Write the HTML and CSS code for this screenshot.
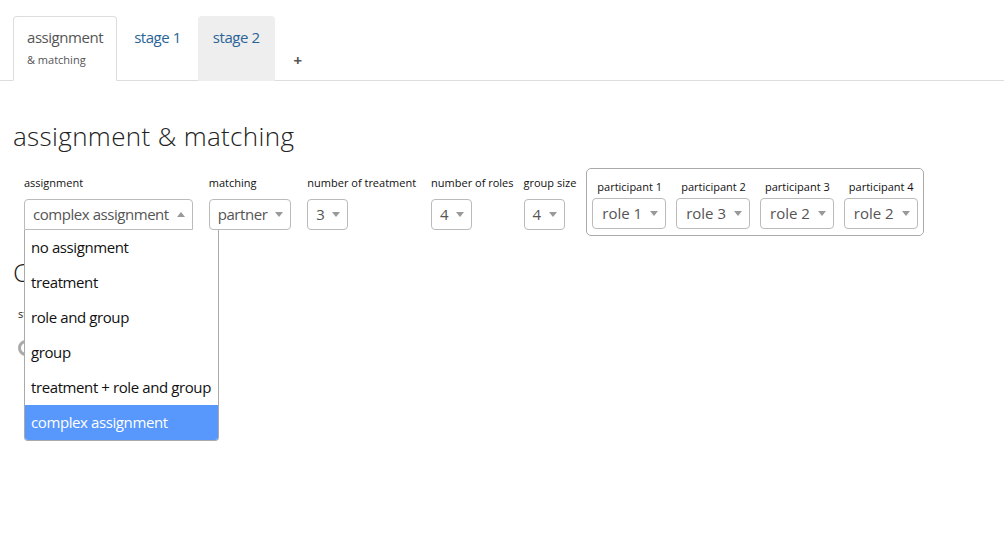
FILE: index.html
```html
<!DOCTYPE html>
<html>
<head>
<meta charset="utf-8">
<link rel="stylesheet" href="styles.css">
</head>
<body>
<ul class="tabs">
  <li class="tab active"><a>assignment<br><small>&amp; matching</small></a></li>
  <li class="tab"><a>stage 1</a></li>
  <li class="tab hover"><a>stage 2</a></li>
  <li class="tab plus"><a>+</a></li>
</ul>
<main class="page">
  <h1 class="title">assignment &amp; matching</h1>
  <div class="row">
    <div class="field outer">
      <label>assignment</label>
      <div class="select open">complex assignment<span class="caret up"></span></div>
      <ul class="dropdown">
        <li>no assignment</li>
        <li>treatment</li>
        <li>role and group</li>
        <li>group</li>
        <li>treatment + role and group</li>
        <li class="selected">complex assignment</li>
      </ul>
    </div>
    <div class="field outer f-match">
      <label>matching</label>
      <div class="select">partner<span class="caret"></span></div>
    </div>
    <div class="field outer f-treat">
      <label>number of treatment</label>
      <div class="select">3<span class="caret"></span></div>
    </div>
    <div class="field outer f-roles">
      <label>number of roles</label>
      <div class="select">4<span class="caret"></span></div>
    </div>
    <div class="field outer f-size">
      <label>group size</label>
      <div class="select">4<span class="caret"></span></div>
    </div>
    <div class="box">
      <div class="field inner">
        <label>participant 1</label>
        <div class="select">role 1<span class="caret"></span></div>
      </div>
      <div class="field inner">
        <label>participant 2</label>
        <div class="select">role 3<span class="caret"></span></div>
      </div>
      <div class="field inner">
        <label>participant 3</label>
        <div class="select">role 2<span class="caret"></span></div>
      </div>
      <div class="field inner">
        <label>participant 4</label>
        <div class="select">role 2<span class="caret"></span></div>
      </div>
    </div>
  </div>
  <h2 class="title second">Conditions</h2>
  <div class="sub">
    <label class="small">stages</label>
    <div class="ring"></div>
  </div>
</main>
</body>
</html>
```
FILE: styles.css
```css
html, body {
  margin: 0;
  padding: 0;
  background: #fff;
  font-family: "Open Sans", "Liberation Sans", sans-serif;
  color: #222;
}

body {
  min-height: 537px;
}

.tabs {
  list-style: none;
  margin: 0 1px 0 0;
  padding: 16px 0 0 13px;
  display: flex;
  border-bottom: 1px solid #ddd;
}

.tab {
  display: flex;
  margin: 0 2px -1px 0;
}

.tab a {
  display: block;
  padding: 10px 14px 11px 14px;
  font-size: 15px;
  letter-spacing: -0.45px;
  line-height: 21px;
  color: #2a6496;
  border: 1px solid transparent;
  border-bottom: 0;
  border-radius: 4px 4px 0 0;
}

.tab small {
  font-size: 11px;
  letter-spacing: 0;
}

.tab.active a {
  color: #555;
  background: #fff;
  border-color: #ddd;
  border-bottom: 1px solid #fff;
  padding: 10px 13px;
}

.tab.hover a {
  background: #eee;
  border-color: #eee;
}

.tab.plus a {
  align-self: flex-end;
  color: #555;
  font-weight: 700;
  padding: 0 14px 10px 16px;
}

.page {
  padding: 0 13px;
}

.title {
  font-size: 26px;
  font-weight: 300;
  letter-spacing: 0.35px;
  line-height: 28.6px;
  margin: 41px 0 0 0;
  color: #222;
}

.title.second {
  margin-top: 22px;
}

.row {
  display: flex;
  align-items: flex-start;
  margin-top: 17px;
  padding-left: 11px;
}

.field {
  position: relative;
  display: flex;
  flex-direction: column;
  align-items: flex-start;
}

.field label {
  font-size: 11px;
  line-height: 16px;
  color: #111;
  white-space: nowrap;
}

.outer {
  padding-top: 7px;
  margin-right: 16px;
}

.outer label {
  margin-bottom: 8px;
}

.f-match { margin-right: 16px; }
.f-treat { margin-right: 15px; }
.f-roles { margin-right: 10px; }
.f-size { margin-right: 10px; }

.select {
  box-sizing: border-box;
  height: 31px;
  display: flex;
  align-items: center;
  padding: 0 7px 0 8px;
  border: 1px solid #bbb;
  border-radius: 4px;
  font-size: 15px;
  letter-spacing: -0.45px;
  color: #555;
  white-space: nowrap;
  background: #fff;
}

.select.open {
  border-radius: 4px 4px 0 0;
}

.caret {
  display: inline-block;
  width: 0;
  height: 0;
  margin-left: 8px;
  border-left: 4px solid transparent;
  border-right: 4px solid transparent;
  border-top: 5px solid #999;
}

.caret.up {
  border-top: 0;
  border-bottom: 5px solid #999;
}

.box {
  display: flex;
  gap: 10px;
  border: 1px solid #aaa;
  border-radius: 5px;
  padding: 10px 5px 6px 5px;
}

.inner label {
  margin: 0 0 3px 5px;
}

.inner .select {
  padding-left: 9px;
  letter-spacing: 0;
}

.dropdown {
  position: absolute;
  z-index: 5;
  left: 0;
  top: 62px;
  width: 195px;
  box-sizing: border-box;
  margin: 0;
  padding: 0;
  list-style: none;
  background: #fff;
  border: 1px solid #aaa;
  border-top: 0;
  border-radius: 0 0 4px 4px;
  overflow: hidden;
}

.dropdown li {
  height: 35px;
  line-height: 35px;
  padding-left: 6px;
  font-size: 15px;
  letter-spacing: -0.4px;
  color: #111;
  white-space: nowrap;
}

.dropdown li.selected {
  background: #5897fb;
  color: #fff;
}

.sub {
  padding-left: 5px;
  display: flex;
  flex-direction: column;
  align-items: flex-start;
}

.small {
  font-size: 11px;
  line-height: 16px;
  margin-top: 20px;
}

.ring {
  margin-top: 18px;
  width: 10px;
  height: 10px;
  border: 3px solid #aaa;
  border-radius: 50%;
}
```
